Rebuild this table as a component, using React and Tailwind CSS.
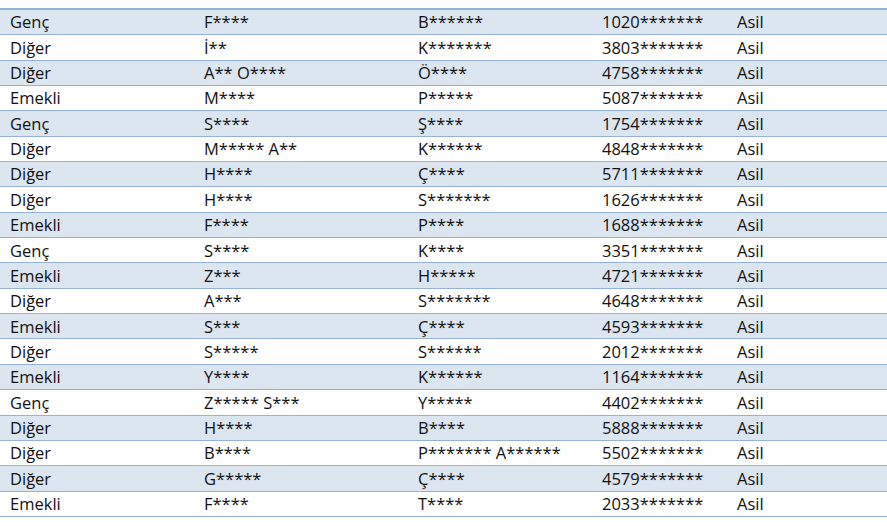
import React from 'react';

const rows = [
  ['Genç', 'F****', 'B******', '1020*******', 'Asil'],
  ['Diğer', 'İ**', 'K*******', '3803*******', 'Asil'],
  ['Diğer', 'A** O****', 'Ö****', '4758*******', 'Asil'],
  ['Emekli', 'M****', 'P*****', '5087*******', 'Asil'],
  ['Genç', 'S****', 'Ş****', '1754*******', 'Asil'],
  ['Diğer', 'M***** A**', 'K******', '4848*******', 'Asil'],
  ['Diğer', 'H****', 'Ç****', '5711*******', 'Asil'],
  ['Diğer', 'H****', 'S*******', '1626*******', 'Asil'],
  ['Emekli', 'F****', 'P****', '1688*******', 'Asil'],
  ['Genç', 'S****', 'K****', '3351*******', 'Asil'],
  ['Emekli', 'Z***', 'H*****', '4721*******', 'Asil'],
  ['Diğer', 'A***', 'S*******', '4648*******', 'Asil'],
  ['Emekli', 'S***', 'Ç****', '4593*******', 'Asil'],
  ['Diğer', 'S*****', 'S******', '2012*******', 'Asil'],
  ['Emekli', 'Y****', 'K******', '1164*******', 'Asil'],
  ['Genç', 'Z***** S***', 'Y*****', '4402*******', 'Asil'],
  ['Diğer', 'H****', 'B****', '5888*******', 'Asil'],
  ['Diğer', 'B****', 'P******* A******', '5502*******', 'Asil'],
  ['Diğer', 'G*****', 'Ç****', '4579*******', 'Asil'],
  ['Emekli', 'F****', 'T****', '2033*******', 'Asil'],
];

export default function App() {
  return (
    <div className="w-[887px] h-[526px] bg-white pt-2 font-['Open_Sans',sans-serif] text-[16.5px] text-[#111]">
      <div className="border-t-2 border-[#95b3d7]">
        {rows.map((r, i) => (
          <div
            key={i}
            className={`grid grid-cols-[194px_214px_184px_135px_1fr] items-center pl-[10px] h-[25.35px] border-b border-[#95b3d7] ${
              i % 2 === 0 ? 'bg-[#dce6f1]' : 'bg-white'
            }`}
          >
            {r.map((c, j) => (
              <div key={j} className="whitespace-nowrap leading-none pt-px">{c}</div>
            ))}
          </div>
        ))}
      </div>
    </div>
  );
}
